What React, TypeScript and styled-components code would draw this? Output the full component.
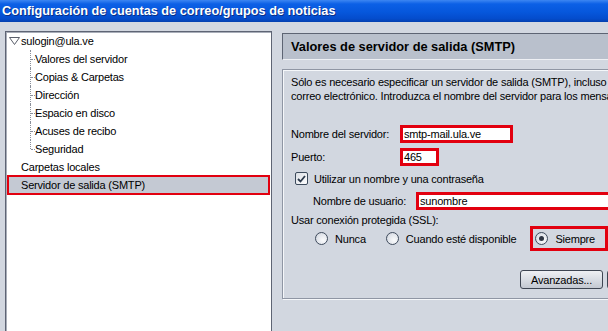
import React from 'react';
import styled, { createGlobalStyle } from 'styled-components';

const Global = createGlobalStyle`
  html, body { margin: 0; padding: 0; }
  body {
    width: 608px; height: 331px; overflow: hidden;
    font-family: "Liberation Sans", Arial, sans-serif;
  }
`;

const Window = styled.div`
  width: 608px;
  height: 331px;
  overflow: hidden;
  background: #d2d7e0;
  display: flex;
  flex-direction: column;
  font-size: 11px;
  letter-spacing: -0.2px;
  color: #000;
`;

const TitleBar = styled.div`
  height: 22px;
  flex: none;
  display: flex;
  align-items: center;
  padding-left: 2px;
  background: linear-gradient(to bottom, #3d86f2 0%, #0c60e6 18%, #0657dc 55%, #044ccc 85%, #033fae 100%);
  color: #fff;
  font-weight: bold;
  font-size: 12.7px;
  letter-spacing: 0;
  text-shadow: 1px 1px 0 #0b2f86;
  white-space: nowrap;
`;

const Body = styled.div`
  flex: 1;
  min-height: 0;
  display: flex;
  align-items: flex-start;
  gap: 10px;
  padding: 9px 0 0 5px;
  overflow: hidden;
`;

const TreePanel = styled.div`
  flex: none;
  width: 267px;
  height: 320px;
  box-sizing: border-box;
  background: #fff;
  border: 1px solid #5e6474;
  box-shadow: inset 1px 1px 0 #a9aeb9;
`;

const TreeRow = styled.div<{ $indent: number }>`
  height: 18px;
  display: flex;
  align-items: center;
  padding-left: ${p => p.$indent}px;
  white-space: nowrap;
`;

const Twisty = styled.svg`
  width: 11px;
  height: 8px;
  margin-right: 1px;
  flex: none;
`;

const ChildRow = styled.div<{ $last?: boolean }>`
  position: relative;
  height: 18px;
  display: flex;
  align-items: center;
  padding-left: 29px;
  white-space: nowrap;
  &::before {
    content: '';
    position: absolute;
    left: 24px;
    top: 0;
    height: ${p => (p.$last ? '9px' : '18px')};
    border-left: 1px dotted #8a8f99;
  }
  &::after {
    content: '';
    position: absolute;
    left: 25px;
    top: 9px;
    width: 4px;
    border-top: 1px dotted #8a8f99;
  }
`;

const SelectedRow = styled.div`
  height: 20px;
  box-sizing: border-box;
  margin: -1px 1px 0 1px;
  display: flex;
  align-items: center;
  padding-left: 12px;
  background: #c4c9d3;
  border: 2px solid #e2000f;
  white-space: nowrap;
`;

const Pane = styled.div`
  flex: none;
  width: 420px;
  display: flex;
  flex-direction: column;
`;

const Header = styled.div`
  height: 27px;
  margin-top: 2px;
  box-sizing: border-box;
  display: flex;
  align-items: center;
  padding-left: 8px;
  background: #b9c0cc;
  border-top: 1px solid #5d6473;
  border-left: 1px solid #5d6473;
  border-bottom: 1px solid #eef0f4;
  font-weight: bold;
  font-size: 12.8px;
  letter-spacing: 0;
  color: #000;
  white-space: nowrap;
`;

const GroupBox = styled.div`
  margin-top: 9px;
  height: 230px;
  box-sizing: border-box;
  border: 1px solid #8f96a4;
  box-shadow: inset 1px 1px 0 #f5f7fa, 1px 1px 0 #f5f7fa;
  padding: 5px 0 0 8px;
  display: flex;
  flex-direction: column;
`;

const IntroLine = styled.div`
  height: 14px;
  line-height: 14px;
  white-space: nowrap;
`;

const FieldRow = styled.div<{ $top: number; $indent?: number }>`
  display: flex;
  align-items: center;
  margin-top: ${p => p.$top}px;
  padding-left: ${p => p.$indent ?? 0}px;
  white-space: nowrap;
`;

const Label = styled.span<{ $width: number }>`
  width: ${p => p.$width}px;
  flex: none;
`;

const TextField = styled.div<{ $width: number }>`
  width: ${p => p.$width}px;
  height: 18px;
  box-sizing: border-box;
  border: 3px solid #e2000f;
  background: #fff;
  display: flex;
  align-items: center;
  padding-left: 1px;
  white-space: nowrap;
  overflow: hidden;
`;

const CheckBox = styled.span`
  width: 13px;
  height: 13px;
  box-sizing: border-box;
  border: 1px solid #3c4a5c;
  border-radius: 2px;
  background: linear-gradient(135deg, #dce0e6, #fdfdfe);
  display: inline-flex;
  align-items: center;
  justify-content: center;
  margin-right: 6px;
  flex: none;
`;

const Radios = styled.div`
  display: flex;
  align-items: center;
  height: 25px;
  margin-left: 24px;
`;

const RadioOption = styled.label<{ $boxed?: boolean; $space: number }>`
  display: flex;
  align-items: center;
  margin-right: ${p => p.$space}px;
  height: 25px;
  box-sizing: border-box;
  white-space: nowrap;
  ${p => (p.$boxed ? 'border: 3px solid #e2000f; padding: 0 10px 0 2px;' : '')}
`;

const RadioCircle = styled.span<{ $on?: boolean }>`
  width: 13px;
  height: 13px;
  box-sizing: border-box;
  border-radius: 50%;
  border: 1px solid #3f4b5d;
  background: radial-gradient(circle at 65% 65%, #fafbfc 0%, #e3e6ec 55%, #c9ced7 100%);
  margin-right: 7px;
  display: inline-flex;
  align-items: center;
  justify-content: center;
  flex: none;
  &::after {
    content: '';
    width: 5px;
    height: 5px;
    border-radius: 50%;
    background: ${p => (p.$on ? '#2f3644' : 'transparent')};
  }
`;

const ButtonRow = styled.div`
  display: flex;
  gap: 4px;
  margin-top: 19px;
  padding-left: 229px;
`;

const Button = styled.button`
  height: 19px;
  min-width: 83px;
  box-sizing: border-box;
  border: 1px solid #3e4552;
  border-radius: 3px;
  background: linear-gradient(to bottom, #eef0f3 0%, #d9dde4 50%, #c3c8d1 100%);
  font-family: "Liberation Sans", Arial, sans-serif;
  font-size: 11px;
  letter-spacing: -0.2px;
  color: #000;
  padding: 0 6px;
  white-space: nowrap;
`;

export default function App() {
  return (
    <>
      <Global />
      <Window>
        <TitleBar>Configuración de cuentas de correo/grupos de noticias</TitleBar>
        <Body>
          <TreePanel>
            <TreeRow $indent={3}>
              <Twisty viewBox="0 0 11 8">
                <polygon points="0.5,0.5 10.5,0.5 5.5,7.5" fill="#fff" stroke="#5a5f6b" strokeWidth="1" />
              </Twisty>
              sulogin@ula.ve
            </TreeRow>
            <ChildRow>Valores del servidor</ChildRow>
            <ChildRow>Copias &amp; Carpetas</ChildRow>
            <ChildRow>Dirección</ChildRow>
            <ChildRow>Espacio en disco</ChildRow>
            <ChildRow>Acuses de recibo</ChildRow>
            <ChildRow $last>Seguridad</ChildRow>
            <TreeRow $indent={15}>Carpetas locales</TreeRow>
            <SelectedRow>Servidor de salida (SMTP)</SelectedRow>
          </TreePanel>
          <Pane>
            <Header>Valores de servidor de salida (SMTP)</Header>
            <GroupBox>
              <IntroLine>Sólo es necesario especificar un servidor de salida (SMTP), incluso si tiene varias cuentas de</IntroLine>
              <IntroLine>correo electrónico. Introduzca el nombre del servidor para los mensajes salientes.</IntroLine>
              <FieldRow $top={22}>
                <Label $width={109}>Nombre del servidor:</Label>
                <TextField $width={113}>smtp-mail.ula.ve</TextField>
              </FieldRow>
              <FieldRow $top={5}>
                <Label $width={109}>Puerto:</Label>
                <TextField $width={39}>465</TextField>
              </FieldRow>
              <FieldRow $top={6} $indent={4}>
                <CheckBox>
                  <svg width="9" height="8" viewBox="0 0 9 8">
                    <polyline points="1,4 3.5,6.5 8,1" fill="none" stroke="#2d3a4c" strokeWidth="1.8" />
                  </svg>
                </CheckBox>
                Utilizar un nombre y una contraseña
              </FieldRow>
              <FieldRow $top={7} $indent={22}>
                <Label $width={103}>Nombre de usuario:</Label>
                <TextField $width={280}>sunombre</TextField>
              </FieldRow>
              <FieldRow $top={4}>Usar conexión protegida (SSL):</FieldRow>
              <Radios>
                <RadioOption $space={20}>
                  <RadioCircle />
                  Nunca
                </RadioOption>
                <RadioOption $space={14}>
                  <RadioCircle />
                  Cuando esté disponible
                </RadioOption>
                <RadioOption $boxed $space={0}>
                  <RadioCircle $on />
                  Siempre
                </RadioOption>
              </Radios>
              <ButtonRow>
                <Button>Avanzadas...</Button>
                <Button>Establecer predeterminado</Button>
              </ButtonRow>
            </GroupBox>
          </Pane>
        </Body>
      </Window>
    </>
  );
}
